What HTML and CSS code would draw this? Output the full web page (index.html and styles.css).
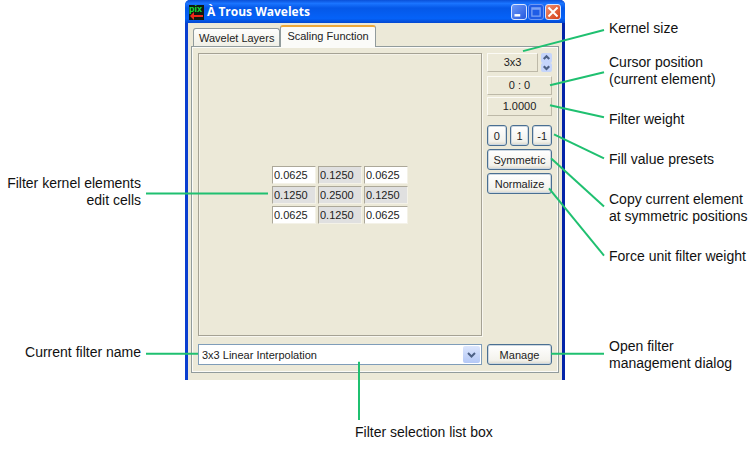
FILE: index.html
```html
<!DOCTYPE html>
<html lang="en">

<head>
    <meta charset="UTF-8">
    <meta name="viewport" content="width=device-width, initial-scale=1.0">
    <title>À Trous Wavelets</title>
    <link rel="stylesheet" href="styles.css">
</head>

<body>
    <main class="figure">
        <div class="notes notes-left">
            <p class="note">Filter kernel elements<br>edit cells</p>
            <label class="note note-last" for="filter-name">Current filter name</label>
        </div>

        <section class="window">
            <header class="title-bar">
                <svg class="app-icon" viewBox="0 0 15 15" aria-hidden="true">
                    <rect width="15" height="15" fill="#101810" />
                    <text x="0" y="7" fill="#12e03a">pix</text>
                    <path d="M1 11L5 7V10H14V12H5V15Z" fill="#f02818" />
                </svg>
                <h1>À Trous Wavelets</h1>
                <button class="window-button" aria-label="Minimize">
                    <svg viewBox="0 0 17 17"><path d="M3 12.5H10" stroke="#fff" stroke-width="3" /></svg>
                </button>
                <button class="window-button maximize" aria-label="Maximize" disabled>
                    <svg viewBox="0 0 17 17"><path d="M3.5 3.5H13.5V13.5H3.5ZM3.5 5H13.5" fill="none" stroke="#7da2f5" stroke-width="1.5" /></svg>
                </button>
                <button class="window-button close" aria-label="Close">
                    <svg viewBox="0 0 17 17"><path d="M3 3L14 14M14 3L3 14" stroke="#fff" stroke-width="2.4" /></svg>
                </button>
            </header>

            <div class="window-body">
                <nav class="tabs">
                    <button class="tab">Wavelet Layers</button>
                    <button class="tab active">Scaling Function</button>
                </nav>

                <div class="panel">
                    <div class="canvas">
                        <div class="kernel">
                            <input value="0.0625" aria-label="Row 1, column 1">
                            <input class="shaded" value="0.1250" aria-label="Row 1, column 2">
                            <input value="0.0625" aria-label="Row 1, column 3">
                            <input class="shaded" value="0.1250" aria-label="Row 2, column 1">
                            <input class="shaded" value="0.2500" aria-label="Row 2, column 2">
                            <input class="shaded" value="0.1250" aria-label="Row 2, column 3">
                            <input value="0.0625" aria-label="Row 3, column 1">
                            <input class="shaded" value="0.1250" aria-label="Row 3, column 2">
                            <input value="0.0625" aria-label="Row 3, column 3">
                        </div>
                    </div>

                    <div class="tools">
                        <div class="size-row">
                            <output class="readout">3x3</output>
                            <div class="spinner">
                                <button aria-label="Larger kernel">
                                    <svg viewBox="0 0 10 8"><path d="M2.5 5.5L5 3L7.5 5.5" /></svg>
                                </button>
                                <button aria-label="Smaller kernel">
                                    <svg viewBox="0 0 10 8"><path d="M2.5 3L5 5.5L7.5 3" /></svg>
                                </button>
                            </div>
                        </div>
                        <div class="readouts">
                            <output class="readout">0 : 0</output>
                            <output class="readout">1.0000</output>
                        </div>
                        <div class="actions">
                            <div class="presets">
                                <button class="button">0</button>
                                <button class="button">1</button>
                                <button class="button">-1</button>
                            </div>
                            <button class="button">Symmetric</button>
                            <button class="button">Normalize</button>
                        </div>
                    </div>

                    <div class="select">
                        <select id="filter-name">
                            <option>3x3 Linear Interpolation</option>
                        </select>
                        <svg class="select-arrow" viewBox="0 0 17 17" aria-hidden="true">
                            <path d="M5 7L8.5 10.5L12 7" />
                        </svg>
                    </div>
                    <button class="button">Manage</button>
                </div>
            </div>
        </section>

        <div class="notes notes-right">
            <p class="note">Kernel size</p>
            <p class="note note-close">Cursor position<br>(current element)</p>
            <p class="note">Filter weight</p>
            <p class="note">Fill value presets</p>
            <p class="note">Copy current element<br>at symmetric positions</p>
            <p class="note">Force unit filter weight</p>
            <p class="note note-last">Open filter<br>management dialog</p>
        </div>

        <label class="note note-bottom" for="filter-name">Filter selection list box</label>

        <!-- Leader lines from the notes to the controls -->
        <svg class="leaders" viewBox="0 0 750 451" preserveAspectRatio="none" aria-hidden="true">
            <path d="M146 193H268" />
            <path d="M146 353H198" />
            <path d="M359 361V419" />
            <path d="M523 51L604 30" />
            <path d="M550 85L604 72" />
            <path d="M550 105L604 117" />
            <path d="M554 134L604 158" />
            <path d="M551 158L604 206" />
            <path d="M549 188L604 255" />
            <path d="M551 353H604" />
        </svg>
    </main>
</body>

</html>
```

FILE: styles.css
```css
* {
    margin: 0;
    padding: 0;
    box-sizing: border-box;
}

body {
    background-color: #ffffff;
    color: #111111;
    font-family: "Liberation Sans", Arial, Helvetica, sans-serif;
}

button,
input,
select {
    font-family: inherit;
    font-size: 11px;
    color: #222222;
}

.figure {
    position: relative;
    display: grid;
    grid-template-columns: 185fr 380fr 185fr;
    padding-bottom: 11px;
}

.leaders {
    position: absolute;
    inset: 0;
    width: 100%;
    height: 100%;
    fill: none;
    stroke: #1fc070;
    stroke-width: 2;
    pointer-events: none;
}

/* Notes */

.notes {
    display: flex;
    flex-direction: column;
    gap: 23px;
    white-space: nowrap;
}

.notes-left {
    padding: 175px 44px 19px 0;
    text-align: right;
}

.notes-right {
    padding: 20px 0 8px 44px;
}

.note {
    font-size: 14px;
    line-height: 17px;
}

.note-close {
    margin-top: -6px;
}

.note-last {
    margin-top: auto;
}

.note-bottom {
    grid-column: 2;
    margin-top: 44px;
    padding-left: 170px;
}

/* Window */

.window {
    display: flex;
    flex-direction: column;
    border: solid #0a3fd0;
    border-width: 0 3px;
    border-right-color: #0424a8;
    border-radius: 5px 5px 0 0;
    background-color: #ece9d8;
}

.title-bar {
    display: flex;
    align-items: center;
    gap: 1px;
    height: 23px;
    margin: 0 -3px;
    padding: 1px 4px 0;
    border-radius: 5px 5px 0 0;
    background: linear-gradient(#0a50d8, #1a74ff 15%, #0558e8 35%, #0562f8 80%, #0348d0);
}

.title-bar h1 {
    flex: 1;
    padding-left: 2px;
    color: #ffffff;
    font: bold 12px/20px "Open Sans", "Noto Sans", sans-serif;
}

.app-icon {
    width: 15px;
    height: 15px;
    font: bold 9px "Liberation Sans", sans-serif;
}

.window-button {
    width: 16px;
    height: 16px;
    border: 1px solid #dbe6ff;
    border-radius: 3px;
    background: linear-gradient(135deg, #6c98f8, #2458de);
}

.window-button svg {
    display: block;
    width: 100%;
}

.window-button.maximize {
    border-color: #6e98f4;
    background: #1f5ce6;
}

.window-button.close {
    background: linear-gradient(135deg, #f09070, #d43c14);
}

.window-body {
    padding: 2px 3px 7px;
}

.tabs {
    display: flex;
    align-items: flex-end;
    padding-left: 2px;
}

.tab {
    height: 18px;
    padding: 0 5px;
    border: 1px solid #919b9c;
    border-bottom: 0;
    border-radius: 3px 3px 0 0;
    background: linear-gradient(#fefefd, #f0efe6);
    white-space: nowrap;
}

.tab.active {
    position: relative;
    height: 22px;
    margin-bottom: -1px;
    padding: 0 6px 2px;
    border-top: 2px solid #eda83a;
    background: #fbfbf8;
}

.panel {
    display: grid;
    grid-template-columns: 1fr 65px;
    gap: 8px 5px;
    padding: 6px 6px 7px;
    border: 1px solid #919b9c;
    box-shadow: inset 0 0 0 1px #fbfbf8;
}

.canvas {
    display: flex;
    align-items: center;
    justify-content: center;
    min-height: 283px;
    border: 1px solid #a5a294;
    box-shadow: inset 1px 1px #f4f2e8, 1px 1px #f8f7f0;
}

.kernel {
    display: grid;
    grid-template-columns: repeat(3, 44px);
    gap: 2px;
}

.kernel input {
    width: 100%;
    height: 18px;
    padding-left: 1px;
    border: 1px solid;
    border-color: #aca899 #f4f2e8 #f4f2e8 #aca899;
    background-color: #ffffff;
}

.kernel input.shaded {
    background-color: #e0e0e0;
}

/* Side tools */

.tools,
.readouts,
.actions {
    display: flex;
    flex-direction: column;
}

.readouts {
    gap: 2px;
    margin: 4px 0 9px;
}

.actions {
    gap: 3px;
}

.size-row {
    display: flex;
    gap: 3px;
}

.size-row .readout {
    flex: 1;
}

.readout {
    height: 19px;
    border: 1px solid;
    border-color: #fbfaf5 #bdb9a8 #bdb9a8 #fbfaf5;
    color: #222222;
    font-size: 11px;
    line-height: 17px;
    text-align: center;
}

.spinner {
    display: flex;
    flex-direction: column;
    width: 11px;
}

.spinner button {
    flex: 1;
    border: 0;
    border-radius: 2px;
    background: #c5d5fb;
}

.spinner svg {
    display: block;
    width: 100%;
}

.spinner path,
.select-arrow path {
    fill: none;
    stroke: #4d6185;
    stroke-width: 2;
}

.presets {
    display: grid;
    grid-template-columns: repeat(3, 1fr);
    gap: 3px;
}

.button {
    height: 21px;
    border: 1px solid #4a6f92;
    border-radius: 3px;
    background: linear-gradient(#ffffff, #f3f2ec 80%, #dcd8cb);
    box-shadow: inset 0 0 0 1px #ccd7e0;
}

.select {
    position: relative;
}

.select select {
    width: 100%;
    height: 21px;
    padding: 0 20px 0 3px;
    border: 1px solid #7f9db9;
    background-color: #ffffff;
    appearance: none;
}

.select-arrow {
    position: absolute;
    top: 2px;
    right: 2px;
    width: 17px;
    height: 17px;
    border-radius: 2px;
    background: linear-gradient(#dce6fd, #b4c8f6);
    pointer-events: none;
}
```
